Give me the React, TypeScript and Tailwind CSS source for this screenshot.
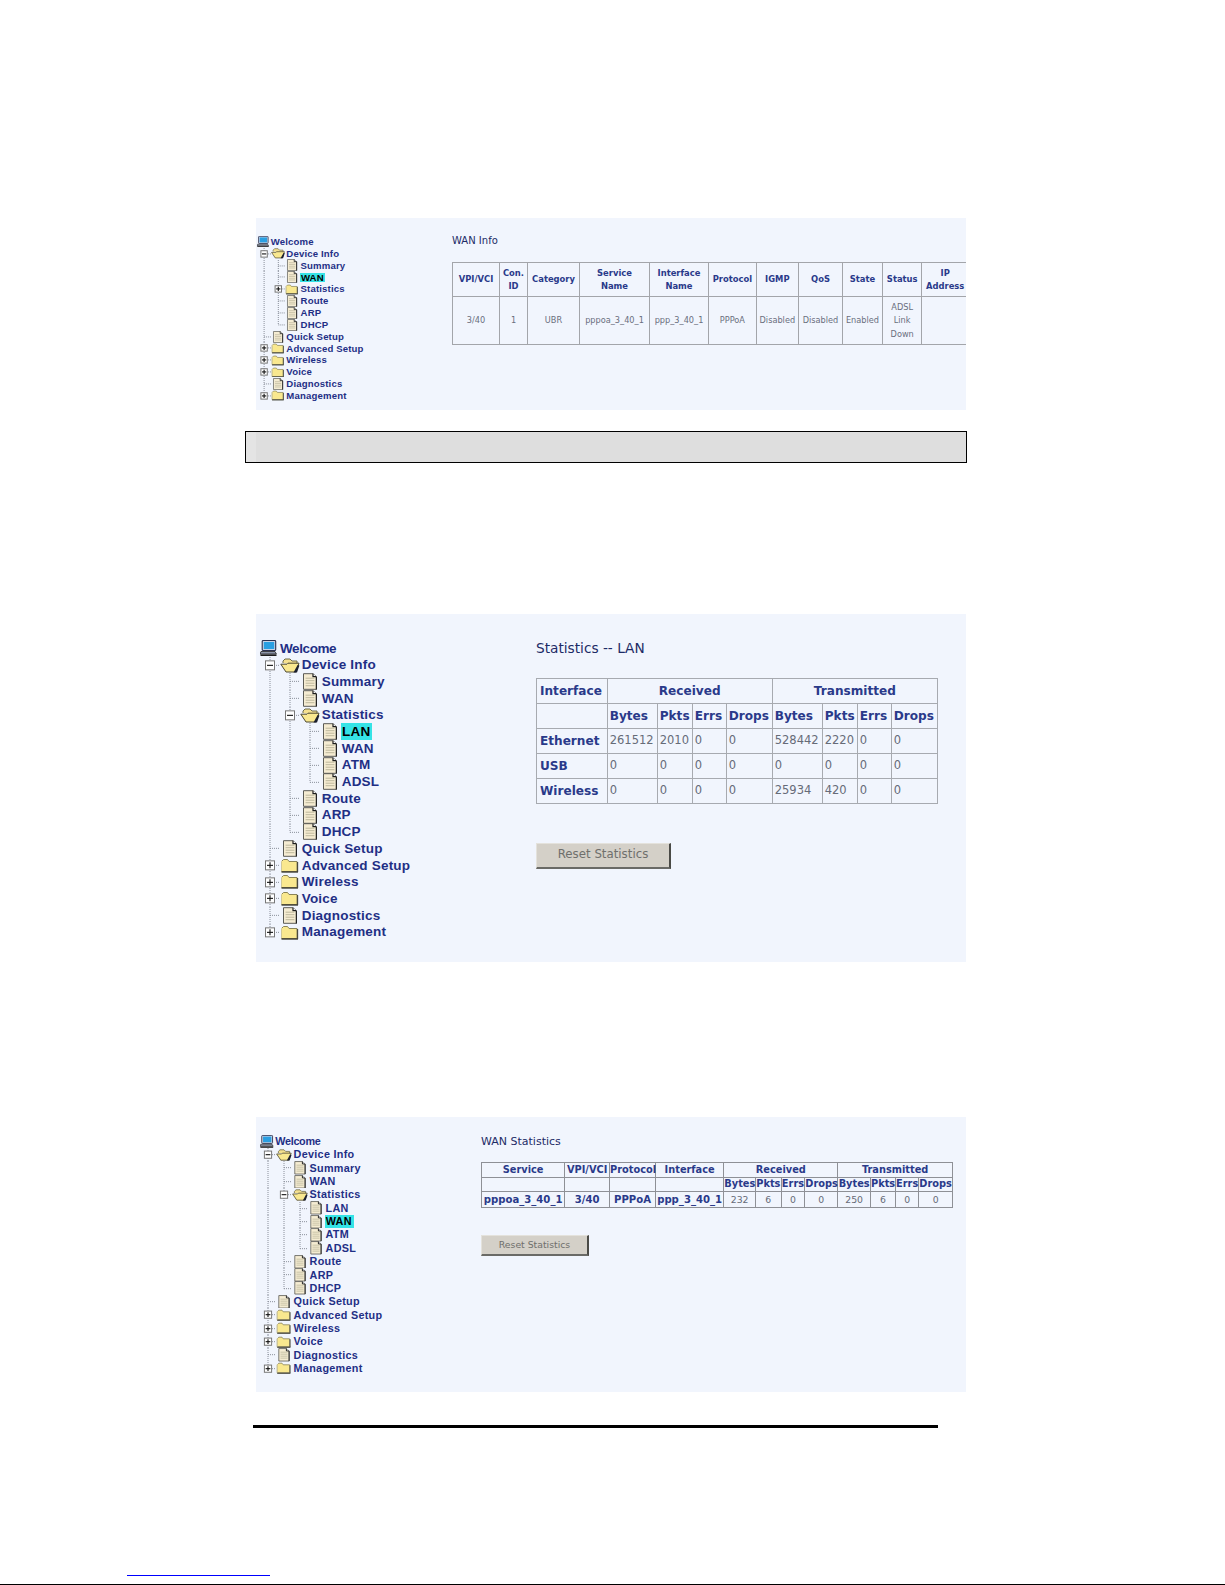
import React from "react";

type Item = { label: string; depth: number; kind: "open" | "closed" | "doc"; exp?: "plus" | "minus"; active?: boolean };

function Computer({ s }: { s: number }) {
  return (
    <svg width={17 * s} height={16 * s} viewBox="0 0 17 16" className="shrink-0">
      <rect x="2.2" y="0.5" width="13.5" height="10" rx="1" fill="#c9d3e6" stroke="#2b3150" strokeWidth="1.1" />
      <rect x="3.8" y="2" width="10.4" height="7" fill="#2a9fe2" />
      <path d="M1 11.5h14l1.4 2.5H0z" fill="#8f97ab" stroke="#222" strokeWidth="0.8" />
      <path d="M0.5 15.2h16" stroke="#111" strokeWidth="1.5" />
    </svg>
  );
}

function Folder({ s, open }: { s: number; open: boolean }) {
  if (open) {
    return (
      <svg width={20 * s} height={15 * s} viewBox="0 0 20 15" className="shrink-0">
        <path d="M3 5V3l2-2h5l2 2h5v4" fill="#f4e08e" stroke="#6d6a4a" strokeWidth="1" />
        <path d="M0.8 6.2H7l1-1h11L16 14H6z" fill="#f9e88f" stroke="#4c4830" strokeWidth="1" />
        <path d="M17.6 7L19.4 7.4 17 14.4h-3.5z" fill="#1c2030" />
      </svg>
    );
  }
  return (
    <svg width={20 * s} height={15 * s} viewBox="0 0 20 15" className="shrink-0">
      <path d="M1.5 13.5V3.5l2-2h4l1.5 2h8v10z" fill="#f9e88f" stroke="#8a8458" strokeWidth="1" />
      <path d="M1.5 2.5v11" stroke="#fff6c4" strokeWidth="0.6" />
      <path d="M1.5 14h16.5" stroke="#33332a" strokeWidth="1.3" />
      <path d="M17.6 4v10" stroke="#44443a" strokeWidth="1.1" />
    </svg>
  );
}

function Doc({ s }: { s: number }) {
  return (
    <svg width={20 * s} height={17 * s} viewBox="0 0 20 17" className="shrink-0">
      <path d="M3.5 0.7h9.5l3.4 3v12.6H3.5z" fill="#f5ecd2" stroke="#5b5b55" strokeWidth="1" />
      <path d="M13 0.7v3h3.4" fill="#ffffff" stroke="#1c1c1c" strokeWidth="1.2" />
      <path d="M16.4 4v12.4" stroke="#222" strokeWidth="1.2" />
      <path d="M5.6 5.2h8.8M5.6 7.7h8.8M5.6 10.2h8.8M5.6 12.7h8.8" stroke="#bdb79c" strokeWidth="1" />
    </svg>
  );
}

function Guides({ w, h, cols, own, hasNext, exp, s }: { w: number; h: number; cols: boolean[]; own: number; hasNext: boolean; exp?: "plus" | "minus"; s: number }) {
  const total = w * (own + 1);
  const cx = (c: number) => c * w + w / 2;
  const mid = h / 2;
  const lineProps = { stroke: "#8a8f9a", strokeWidth: 1, strokeDasharray: "1 1" };
  const box = 9 * s;
  const ex = cx(own);
  return (
    <svg width={total} height={h} className="shrink-0 block">
      {cols.map((on, c) => (on ? <line key={c} x1={cx(c)} x2={cx(c)} y1={0} y2={h} {...lineProps} /> : null))}
      <line x1={ex} x2={ex} y1={0} y2={hasNext ? h : mid} {...lineProps} />
      <line x1={ex} x2={total} y1={mid} y2={mid} {...lineProps} />
      {exp ? (
        <g>
          <rect x={ex - box / 2} y={mid - box / 2} width={box} height={box} fill="#ffffff" stroke="#777" strokeWidth="1" />
          <line x1={ex - box / 3} x2={ex + box / 3} y1={mid} y2={mid} stroke="#111" strokeWidth="1.1" />
          {exp === "plus" ? <line x1={ex} x2={ex} y1={mid - box / 3} y2={mid + box / 3} stroke="#111" strokeWidth="1.1" /> : null}
        </g>
      ) : null}
    </svg>
  );
}

type TreeCfg = {
  s: number;
  row: number;
  rowCls: string;
  textCls: string;
  padCls: string;
  welcomeCls: string;
  activeCls: string;
  labelCls: string;
};

function Tree({ items, cfg }: { items: Item[]; cfg: TreeCfg }) {
  const hasSibling = (i: number, c: number) => {
    for (let j = i + 1; j < items.length; j++) {
      if (items[j].depth < c) return false;
      if (items[j].depth === c) return true;
    }
    return false;
  };
  const w = 20 * cfg.s;
  return (
    <div className={`shrink-0 ${cfg.padCls} ${cfg.textCls} font-['Liberation_Sans',Arial,sans-serif] font-bold text-[#1f2f85]`}>
      <div className={`flex items-center ${cfg.rowCls}`}>
        <Computer s={cfg.s} />
        <span className={cfg.welcomeCls}>Welcome</span>
      </div>
      {items.map((it, i) => {
        const cols = Array.from({ length: it.depth }, (_, c) => hasSibling(i, c));
        return (
          <div key={i} className={`flex items-center ${cfg.rowCls}`}>
            <Guides w={w} h={cfg.row} cols={cols} own={it.depth} hasNext={hasSibling(i, it.depth)} exp={it.exp} s={cfg.s} />
            {it.kind === "doc" ? <Doc s={cfg.s} /> : <Folder s={cfg.s} open={it.kind === "open"} />}
            <span className={it.active ? cfg.activeCls : cfg.labelCls}>{it.label}</span>
          </div>
        );
      })}
    </div>
  );
}

const tail: Item[] = [
  { label: "Quick Setup", depth: 0, kind: "doc" },
  { label: "Advanced Setup", depth: 0, kind: "closed", exp: "plus" },
  { label: "Wireless", depth: 0, kind: "closed", exp: "plus" },
  { label: "Voice", depth: 0, kind: "closed", exp: "plus" },
  { label: "Diagnostics", depth: 0, kind: "doc" },
  { label: "Management", depth: 0, kind: "closed", exp: "plus" },
];

const tree1: Item[] = [
  { label: "Device Info", depth: 0, kind: "open", exp: "minus" },
  { label: "Summary", depth: 1, kind: "doc" },
  { label: "WAN", depth: 1, kind: "doc", active: true },
  { label: "Statistics", depth: 1, kind: "closed", exp: "plus" },
  { label: "Route", depth: 1, kind: "doc" },
  { label: "ARP", depth: 1, kind: "doc" },
  { label: "DHCP", depth: 1, kind: "doc" },
  ...tail,
];

const expanded = (active: string): Item[] => [
  { label: "Device Info", depth: 0, kind: "open", exp: "minus" },
  { label: "Summary", depth: 1, kind: "doc" },
  { label: "WAN", depth: 1, kind: "doc" },
  { label: "Statistics", depth: 1, kind: "open", exp: "minus" },
  { label: "LAN", depth: 2, kind: "doc", active: active === "LAN" },
  { label: "WAN", depth: 2, kind: "doc", active: active === "WAN" },
  { label: "ATM", depth: 2, kind: "doc" },
  { label: "ADSL", depth: 2, kind: "doc" },
  { label: "Route", depth: 1, kind: "doc" },
  { label: "ARP", depth: 1, kind: "doc" },
  { label: "DHCP", depth: 1, kind: "doc" },
  ...tail,
];

const cfg1: TreeCfg = {
  s: 0.71,
  row: 11.85,
  rowCls: "h-[11.85px]",
  textCls: "text-[9.6px] leading-none tracking-[0.15px]",
  padCls: "pl-[0.8px] pt-[17.9px] w-[196px]",
  welcomeCls: "ml-[1.8px]",
  activeCls: "ml-[0.5px] px-[1px] bg-[#35e3e6] text-black",
  labelCls: "ml-[1.2px]",
};
const cfg2: TreeCfg = {
  s: 1,
  row: 16.7,
  rowCls: "h-[16.7px]",
  textCls: "text-[13.5px] leading-none tracking-[0.2px]",
  padCls: "pl-[4px] pt-[26px] w-[280px]",
  welcomeCls: "ml-[3px] tracking-[-0.4px]",
  activeCls: "ml-[0.5px] pl-[1.5px] pr-[2px] h-[17px] leading-[17px] bg-[#35e3e6] text-black",
  labelCls: "ml-[1.7px]",
};
const cfg3: TreeCfg = {
  s: 0.8,
  row: 13.35,
  rowCls: "h-[13.35px]",
  textCls: "text-[10.8px] leading-none tracking-[0.3px]",
  padCls: "pl-[4.2px] pt-[17.8px] w-[225px]",
  welcomeCls: "ml-[1.5px] tracking-[-0.3px]",
  activeCls: "ml-[0.5px] pl-[1px] pr-[2px] h-[13px] leading-[13px] bg-[#35e3e6] text-black",
  labelCls: "ml-[1.4px]",
};

const dv = "font-['DejaVu_Sans','Liberation_Sans',sans-serif]";

function Table1() {
  const th = "border border-[#a3a5aa] font-bold text-[8.4px] leading-[13px] text-[#2a3a8a] text-center p-0";
  const td = "border border-[#a3a5aa] font-normal text-[8.2px] leading-[13.5px] text-[#6a6f7e] text-center p-0";
  const heads = ["VPI/VCI", "Con.\nID", "Category", "Service\nName", "Interface\nName", "Protocol", "IGMP", "QoS", "State", "Status", "IP\nAddress"];
  const cells = ["3/40", "1", "UBR", "pppoa_3_40_1", "ppp_3_40_1", "PPPoA", "Disabled", "Disabled", "Enabled", "ADSL\nLink\nDown", ""];
  const widths = ["w-[47px]", "w-[28px]", "w-[52px]", "w-[70px]", "w-[59px]", "w-[47.7px]", "w-[42.3px]", "w-[44px]", "w-[40px]", "w-[39.4px]", "w-[46.6px]"];
  return (
    <table className="table-fixed border-collapse w-[516px]">
      <colgroup>{widths.map((c, i) => <col key={i} className={c} />)}</colgroup>
      <tbody>
        <tr className="h-[34px]">{heads.map((h, i) => <th key={i} className={`${th} whitespace-pre-line`}>{h}</th>)}</tr>
        <tr className="h-[48px]">{cells.map((h, i) => <td key={i} className={`${td} whitespace-pre-line`}>{h}</td>)}</tr>
      </tbody>
    </table>
  );
}

function Table2() {
  const b = "border-[1.5px] border-[#a7aab0]";
  const head = `${b} font-bold text-[12.1px] text-[#2a3a8a] py-0 pr-0`;
  const thL = `${head} text-left pl-[3px]`;
  const thC = `${head} text-center pl-0`;
  const thS = `${head} text-left pl-[2px]`;
  const td = `${b} font-normal text-[11.5px] text-[#666b78] text-left pl-[2px] pr-0 py-0`;
  const sub = ["Bytes", "Pkts", "Errs", "Drops", "Bytes", "Pkts", "Errs", "Drops"];
  const rows: [string, string[]][] = [
    ["Ethernet", ["261512", "2010", "0", "0", "528442", "2220", "0", "0"]],
    ["USB", ["0", "0", "0", "0", "0", "0", "0", "0"]],
    ["Wireless", ["0", "0", "0", "0", "25934", "420", "0", "0"]],
  ];
  return (
    <table className="table-fixed border-collapse w-[401px]">
      <colgroup>
        <col className="w-[70.7px]" />
        <col className="w-[50px]" /><col className="w-[35px]" /><col className="w-[34px]" /><col className="w-[46px]" />
        <col className="w-[50px]" /><col className="w-[35px]" /><col className="w-[34px]" /><col className="w-[46.3px]" />
      </colgroup>
      <tbody>
        <tr className="h-[25px]">
          <th className={thL}>Interface</th>
          <th colSpan={4} className={thC}>Received</th>
          <th colSpan={4} className={thC}>Transmitted</th>
        </tr>
        <tr className="h-[25px]">
          <td className={td}></td>
          {sub.map((s, i) => <th key={i} className={thS}>{s}</th>)}
        </tr>
        {rows.map(([n, v]) => (
          <tr key={n} className="h-[25px]">
            <th className={thL}>{n}</th>
            {v.map((x, i) => <td key={i} className={td}>{x}</td>)}
          </tr>
        ))}
      </tbody>
    </table>
  );
}

function Table3() {
  const b = "border border-[#8e9096]";
  const th = `${b} font-bold text-[9.8px] leading-none text-[#2a3a8a] text-center p-0`;
  const wide = `${b} font-bold text-[10.1px] leading-none text-[#2a3a8a] text-center p-0 whitespace-nowrap`;
  const td = `${b} font-normal text-[9.3px] leading-none text-[#666b78] text-center p-0`;
  const sub = ["Bytes", "Pkts", "Errs", "Drops", "Bytes", "Pkts", "Errs", "Drops"];
  const vals = ["232", "6", "0", "0", "250", "6", "0", "0"];
  return (
    <table className="table-fixed border-collapse w-[471px]">
      <colgroup>
        <col className="w-[83.3px]" /><col className="w-[44.7px]" /><col className="w-[46px]" /><col className="w-[68.3px]" />
        <col className="w-[31.7px]" /><col className="w-[25.7px]" /><col className="w-[23.6px]" /><col className="w-[33px]" />
        <col className="w-[32.7px]" /><col className="w-[25px]" /><col className="w-[23.3px]" /><col className="w-[33.7px]" />
      </colgroup>
      <tbody>
        <tr className="h-[14.4px]">
          <th className={th}>Service</th>
          <th className={th}>VPI/VCI</th>
          <th className={th}>Protocol</th>
          <th className={th}>Interface</th>
          <th colSpan={4} className={th}>Received</th>
          <th colSpan={4} className={th}>Transmitted</th>
        </tr>
        <tr className="h-[14.4px]">
          <td className={td}></td><td className={td}></td><td className={td}></td><td className={td}></td>
          {sub.map((s, i) => <th key={i} className={th}>{s}</th>)}
        </tr>
        <tr className="h-[16.3px]">
          <th className={wide}>pppoa_3_40_1</th>
          <th className={wide}>3/40</th>
          <th className={wide}>PPPoA</th>
          <th className={wide}>ppp_3_40_1</th>
          {vals.map((v, i) => <td key={i} className={td}>{v}</td>)}
        </tr>
      </tbody>
    </table>
  );
}

function ResetButton({ cls }: { cls: string }) {
  return (
    <button className={`block bg-[#d4d0c8] border-t border-l border-t-[#e4e2dc] border-l-[#e4e2dc] border-r-2 border-b-2 border-r-[#4a4a46] border-b-[#6a6a66] text-[#6f6f6c] ${dv} ${cls}`}>
      Reset Statistics
    </button>
  );
}

export default function App() {
  return (
    <div className="w-full h-[1585px] bg-white flex flex-col overflow-hidden">
      <section className={`ml-[256px] mt-[218px] w-[710px] h-[192px] bg-[#f1f5fd] flex shrink-0 overflow-hidden ${dv}`}>
        <Tree items={tree1} cfg={cfg1} />
        <div className="shrink-0 flex flex-col">
          <h2 className="mt-[17px] h-[12px] text-[10px] leading-[12px] text-[#1d2b66] font-normal">WAN Info</h2>
          <div className="mt-[15.3px]"><Table1 /></div>
        </div>
      </section>

      <div className="ml-[245px] mt-[21px] w-[722px] h-[32px] border border-black bg-[#dedede] flex shrink-0">
        <div className="w-[10px] bg-[#e4e4e4]" />
      </div>

      <section className={`ml-[256px] mt-[151px] w-[710px] h-[348px] bg-[#f1f5fd] flex shrink-0 overflow-hidden ${dv}`}>
        <Tree items={expanded("LAN")} cfg={cfg2} />
        <div className="flex flex-col">
          <h2 className="mt-[26px] h-[16px] text-[13.7px] leading-[16px] text-[#1d2b66] font-normal">Statistics -- LAN</h2>
          <div className="mt-[21.7px]"><Table2 /></div>
          <ResetButton cls="mt-[39px] w-[135px] h-[26px] text-[11.8px]" />
        </div>
      </section>

      <section className={`ml-[256px] mt-[155px] w-[710px] h-[275px] bg-[#f1f5fd] flex shrink-0 overflow-hidden ${dv}`}>
        <Tree items={expanded("WAN")} cfg={cfg3} />
        <div className="flex flex-col">
          <h2 className="mt-[18px] h-[13px] text-[11px] leading-[13px] text-[#1d2b66] font-normal">WAN Statistics</h2>
          <div className="mt-[14.3px]"><Table3 /></div>
          <ResetButton cls="mt-[26.5px] w-[108px] h-[21px] text-[9.3px]" />
        </div>
      </section>

      <div className="ml-[253px] mt-[33px] w-[685px] h-[3px] bg-black shrink-0" />
      <div className="ml-[127px] mt-[147px] w-[143px] h-px bg-[#0000ff] shrink-0" />
      <div className="mt-[8px] w-full h-px bg-black shrink-0" />
    </div>
  );
}
